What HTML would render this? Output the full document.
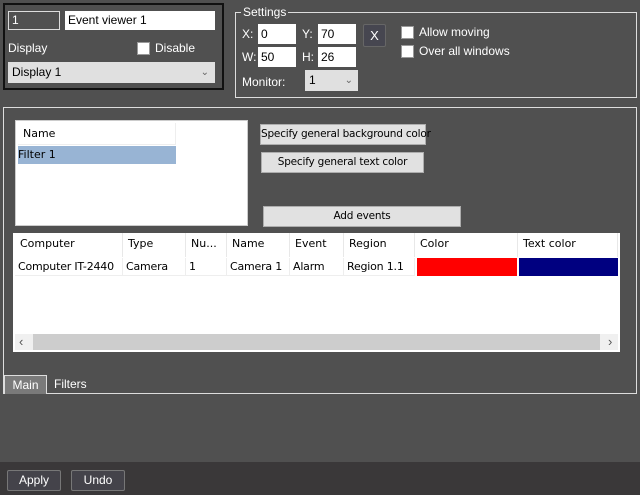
<!DOCTYPE html><html><head><style>
*{box-sizing:border-box;margin:0;padding:0}
body{width:640px;height:495px;background:#505050;font-family:"Liberation Sans",sans-serif;font-size:12px;color:#fff;position:relative;overflow:hidden}
.a{position:absolute;white-space:nowrap}
.w{background:#fff;color:#000}
.cb{position:absolute;width:13px;height:13px;background:#fff;border:1px solid #999}
.btn{position:absolute;background:#e1e1e1;border:1px solid #adadad;color:#000;text-align:center;font-family:"DejaVu Sans",sans-serif;font-size:10.5px;line-height:19px;white-space:nowrap;letter-spacing:-0.2px}
.th{position:absolute;top:0;height:24px;line-height:22px;padding-left:5px;border-right:1px solid #e8e8e8;font-family:"DejaVu Sans",sans-serif;font-size:11px;white-space:nowrap;overflow:hidden}
.td{position:absolute;top:25px;height:18px;line-height:18px;padding-left:3px;border-right:1px solid #eee;border-bottom:1px solid #eee;font-family:"DejaVu Sans",sans-serif;font-size:11px;white-space:nowrap;overflow:hidden;letter-spacing:-0.2px}
</style></head><body>
<div class="a" style="left:3px;top:3px;width:221px;height:87px;border:2px solid #111"></div>
<div class="a" style="left:8px;top:11px;width:52px;height:19px;border:1px solid #ddd;padding-left:3px;line-height:17px">1</div>
<div class="a w" style="left:65px;top:11px;width:150px;height:19px;padding-left:3px;line-height:19px">Event viewer 1</div>
<div class="a" style="left:8px;top:41px">Display</div>
<div class="cb" style="left:137px;top:42px"></div>
<div class="a" style="left:155px;top:41px">Disable</div>
<div class="a" style="left:8px;top:62px;width:207px;height:21px;background:#e0e0e0;color:#000;padding-left:4px;line-height:21px">Display 1<span style="position:absolute;right:6px;color:#666;font-size:10px">&#8964;</span></div>

<div class="a" style="left:235px;top:12px;width:402px;height:86px;border:1px solid #ddd"></div>
<div class="a" style="left:241px;top:5px;background:#505050;padding:0 2px">Settings</div>
<div class="a" style="left:242px;top:27px">X:</div>
<div class="a w" style="left:258px;top:24px;width:38px;height:20px;padding-left:3px;line-height:20px">0</div>
<div class="a" style="left:302px;top:27px">Y:</div>
<div class="a w" style="left:318px;top:24px;width:38px;height:20px;padding-left:3px;line-height:20px">70</div>
<div class="a" style="left:363px;top:24px;width:23px;height:23px;background:#464650;border:1px solid #666;border-radius:2px;text-align:center;line-height:21px;font-size:13px">X</div>
<div class="a" style="left:242px;top:50px">W:</div>
<div class="a w" style="left:258px;top:47px;width:38px;height:20px;padding-left:3px;line-height:20px">50</div>
<div class="a" style="left:302px;top:50px">H:</div>
<div class="a w" style="left:318px;top:47px;width:38px;height:20px;padding-left:3px;line-height:20px">26</div>
<div class="a" style="left:242px;top:75px">Monitor:</div>
<div class="a" style="left:305px;top:70px;width:53px;height:21px;background:#e0e0e0;color:#000;padding-left:4px;line-height:21px">1<span style="position:absolute;right:5px;color:#666;font-size:10px">&#8964;</span></div>
<div class="cb" style="left:401px;top:26px"></div>
<div class="a" style="left:419px;top:25px">Allow moving</div>
<div class="cb" style="left:401px;top:45px"></div>
<div class="a" style="left:419px;top:44px">Over all windows</div>

<div class="a" style="left:3px;top:107px;width:634px;height:287px;border:1px solid #ddd"></div>
<div class="a w" style="left:15px;top:120px;width:233px;height:106px;border:1px solid #ccc">
<div class="a" style="left:2px;top:2px;width:158px;height:22px;border-right:1px solid #eee;border-bottom:1px solid #eee;padding-left:5px;line-height:22px;font-family:'DejaVu Sans',sans-serif;font-size:11px">Name</div>
<div class="a" style="left:2px;top:25px;width:158px;height:18px;background:#98b4d4;line-height:18px;font-family:'DejaVu Sans',sans-serif;font-size:11px">Filter 1</div>
</div>
<div class="btn" style="left:260px;top:124px;width:166px;height:21px">Specify general background color</div>
<div class="btn" style="left:261px;top:152px;width:163px;height:21px">Specify general text color</div>
<div class="btn" style="left:263px;top:206px;width:198px;height:21px">Add events</div>

<div class="a w" style="left:13px;top:233px;width:607px;height:119px">
<div class="th" style="left:2px;width:108px">Computer</div>
<div class="th" style="left:110px;width:63px">Type</div>
<div class="th" style="left:173px;width:41px">Nu...</div>
<div class="th" style="left:214px;width:63px">Name</div>
<div class="th" style="left:277px;width:54px">Event</div>
<div class="th" style="left:331px;width:71px">Region</div>
<div class="th" style="left:402px;width:103px">Color</div>
<div class="th" style="left:505px;width:100px">Text color</div>
<div class="td" style="left:2px;width:108px">Computer IT-2440</div>
<div class="td" style="left:110px;width:63px">Camera</div>
<div class="td" style="left:173px;width:41px">1</div>
<div class="td" style="left:214px;width:63px">Camera 1</div>
<div class="td" style="left:277px;width:54px">Alarm</div>
<div class="td" style="left:331px;width:71px">Region 1.1</div>
<div class="a" style="left:404px;top:25px;width:100px;height:18px;background:#f00"></div>
<div class="a" style="left:506px;top:25px;width:99px;height:18px;background:#000080"></div>
<div class="a" style="left:2px;top:101px;width:603px;height:16px;background:#f0f0f0"></div>
<div class="a" style="left:20px;top:101px;width:567px;height:16px;background:#cdcdcd"></div>
<div class="a" style="left:6px;top:101px;color:#555;font-size:13px;line-height:15px">&lsaquo;</div>
<div class="a" style="left:595px;top:101px;color:#555;font-size:13px;line-height:15px">&rsaquo;</div>
</div>

<div class="a" style="left:4px;top:375px;width:43px;height:19px;background:#7a7a7a;border:1px solid #ddd;border-bottom:none;text-align:center;line-height:18px">Main</div>
<div class="a" style="left:54px;top:377px">Filters</div>

<div class="a" style="left:0;top:462px;width:640px;height:33px;background:#3a3839"></div>
<div class="a" style="left:7px;top:470px;width:54px;height:21px;background:#44434a;border:1px solid #777;border-radius:2px;text-align:center;line-height:19px">Apply</div>
<div class="a" style="left:71px;top:470px;width:54px;height:21px;background:#44434a;border:1px solid #777;border-radius:2px;text-align:center;line-height:19px">Undo</div>
</body></html>
